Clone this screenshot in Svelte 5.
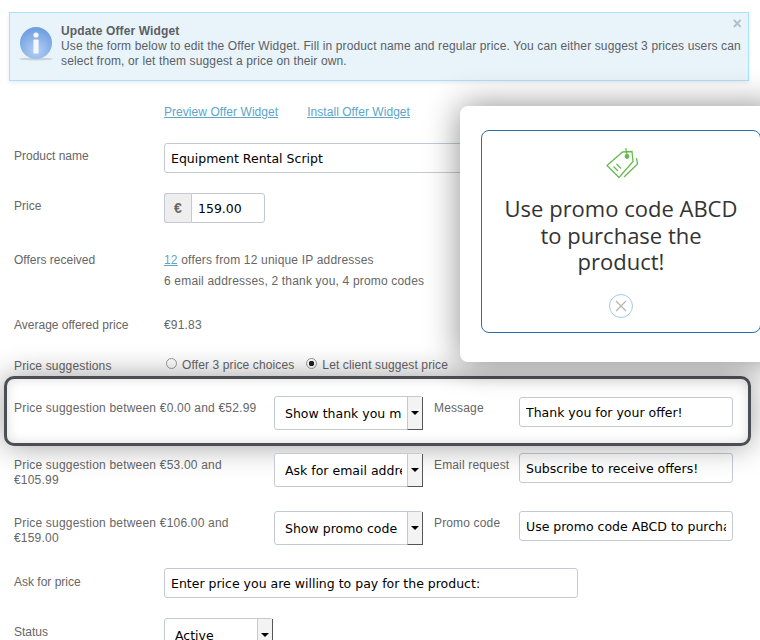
<script>
  const suggestions = [
    {
      label: "Price suggestion between €53.00 and €105.99",
      action: "Ask for email address",
      field: "Email request",
      value: "Subscribe to receive offers!",
    },
    {
      label: "Price suggestion between €106.00 and €159.00",
      action: "Show promo code",
      field: "Promo code",
      value: "Use promo code ABCD to purchase the product!",
    },
  ];
</script>

<div class="page">
  <div class="alert">
    <svg class="info" width="36" height="36" viewBox="0 0 36 36">
      <defs>
        <radialGradient id="ball" cx="50%" cy="75%" r="70%">
          <stop offset="0" stop-color="#b4cff5" />
          <stop offset="1" stop-color="#6f9fe0" />
        </radialGradient>
      </defs>
      <ellipse cx="18" cy="33" rx="17" ry="1.5" fill="#c9d3d8" />
      <circle cx="18" cy="17" r="16" fill="url(#ball)" />
      <circle cx="18" cy="9" r="2.6" fill="#f4f8fd" />
      <rect x="15.4" y="13.5" width="5.2" height="14" rx="1" fill="#f4f8fd" />
    </svg>
    <div class="alert-text">
      <strong>Update Offer Widget</strong><br />
      Use the form below to edit the Offer Widget. Fill in product name and regular price. You can either suggest 3 prices users can select from, or let them suggest a price on their own.
    </div>
    <span class="dismiss">×</span>
  </div>

  <div class="links">
    <a href="#preview">Preview Offer Widget</a>
    <a href="#install">Install Offer Widget</a>
  </div>

  <div class="row product">
    <span class="label">Product name</span>
    <input class="wide" type="text" value="Equipment Rental Script" />
  </div>

  <div class="row price">
    <span class="label">Price</span>
    <div class="money">
      <span class="currency">€</span>
      <input type="text" value="159.00" />
    </div>
  </div>

  <div class="row offers">
    <span class="label">Offers received</span>
    <div class="offers-text">
      <a href="#offers">12</a> offers from 12 unique IP addresses<br />
      6 email addresses, 2 thank you, 4 promo codes
    </div>
  </div>

  <div class="row average">
    <span class="label">Average offered price</span>
    <span class="amount">€91.83</span>
  </div>

  <div class="row choices">
    <span class="label">Price suggestions</span>
    <div class="radios">
      <label><input type="radio" name="mode" />Offer 3 price choices</label>
      <label><input type="radio" name="mode" checked />Let client suggest price</label>
    </div>
  </div>

  <div class="highlight">
    <span class="tier-label">Price suggestion between €0.00 and €52.99</span>
    <div class="select">
      <select><option>Show thank you message</option></select>
      <span class="arrow"></span>
    </div>
    <span class="field-label">Message</span>
    <input class="field" type="text" value="Thank you for your offer!" />
  </div>

  {#each suggestions as tier}
    <div class="tier">
      <span class="tier-label">{tier.label}</span>
      <div class="select">
        <select><option>{tier.action}</option></select>
        <span class="arrow"></span>
      </div>
      <span class="field-label">{tier.field}</span>
      <input class="field" type="text" value={tier.value} />
    </div>
  {/each}

  <div class="row ask">
    <span class="label">Ask for price</span>
    <input class="wide" type="text" value="Enter price you are willing to pay for the product:" />
  </div>

  <div class="row status">
    <span class="label">Status</span>
    <div class="select small">
      <select><option>Active</option></select>
      <span class="arrow"></span>
    </div>
  </div>

  <div class="popup">
    <div class="card">
      <svg width="40" height="40" viewBox="0 0 40 40" fill="none" stroke="#66bb4e" stroke-width="1.3">
        <path d="M21.500 9 L31 8.500 L32 18.500 L18 34.500 L6 22.500 Z" />
        <path d="M35.500 15 L36.500 21 L23 34" />
        <circle cx="26" cy="13.500" r="1.800" fill="#66bb4e" />
        <path d="M26 12 C26 9 24.500 7 25 5" />
        <path d="M15.500 21 L20 25.500 M12.500 23.500 L17 28" />
      </svg>
      <p>Use promo code ABCD to purchase the product!</p>
      <svg class="close" width="26" height="26" viewBox="0 0 26 26" fill="none">
        <circle cx="13" cy="13" r="11.500" stroke="#a9c8e4" />
        <path d="M8 8 L18 18 M18 8 L8 18" stroke="#b3b3b3" stroke-width="1.200" />
      </svg>
    </div>
  </div>
</div>

<style>
  :global(body) {
    margin: 0;
    background: #fff;
  }

  .page {
    position: relative;
    width: 760px;
    height: 640px;
    padding-top: 12px;
    box-sizing: border-box;
    overflow: hidden;
    font-family: "Liberation Sans", Arial, sans-serif;
    font-size: 12px;
    line-height: 16px;
    color: #666;
  }

  a {
    color: #5da5c9;
  }

  .alert {
    position: relative;
    display: flex;
    gap: 7px;
    box-sizing: border-box;
    width: 740px;
    height: 69px;
    margin-left: 9px;
    padding: 11px 0 0 8px;
    background: #e8f3fa;
    border: 1px solid #a8e2f7;
    box-shadow: 0 2px 4px rgba(0, 0, 0, 0.08);
    color: #5c5f66;
    line-height: 15px;
    letter-spacing: 0.13px;
  }

  .info {
    flex: none;
    margin-top: 2px;
  }

  .alert-text {
    width: 688px;
  }

  .dismiss {
    position: absolute;
    top: 3px;
    right: 6px;
    color: #b5bdc2;
    font-size: 16px;
    font-weight: bold;
  }

  .links {
    display: flex;
    gap: 29px;
    margin: 23px 0 0 164px;
    letter-spacing: 0.05px;
  }

  .row {
    display: flex;
    padding-left: 14px;
  }

  .label {
    flex: none;
    width: 150px;
  }

  input[type="text"],
  select {
    box-sizing: border-box;
    height: 30px;
    padding: 0 6px;
    background: #fff;
    border: 1px solid #c3cad6;
    border-radius: 3px;
    color: #000;
    font-family: "DejaVu Sans", Verdana, sans-serif;
    font-size: 12.500px;
  }

  .wide {
    width: 414px;
  }

  .product {
    margin-top: 23px;
  }

  .product .label,
  .price .label {
    padding-top: 5px;
  }

  .price {
    margin-top: 20px;
  }

  .money {
    display: flex;
  }

  .currency {
    box-sizing: border-box;
    width: 27px;
    height: 30px;
    background: #eee;
    border: 1px solid #c3cad6;
    border-right: 0;
    border-radius: 3px 0 0 3px;
    font-weight: bold;
    font-size: 14px;
    line-height: 28px;
    text-align: center;
  }

  .money input[type="text"] {
    width: 74px;
    border-radius: 0 3px 3px 0;
  }

  .offers {
    margin-top: 27px;
    line-height: 21px;
  }

  .offers .label {
    line-height: 20px;
  }

  .offers-text,
  .amount {
    letter-spacing: 0.18px;
  }

  .average {
    margin-top: 25px;
  }

  .choices {
    height: 16px;
    margin-top: 24px;
  }

  .choices .label {
    letter-spacing: 0.17px;
    line-height: 18px;
  }

  .radios {
    display: flex;
    gap: 10px;
    letter-spacing: 0.12px;
  }

  .radios label {
    display: flex;
    align-items: center;
    gap: 5px;
  }

  .radios input {
    appearance: none;
    box-sizing: border-box;
    width: 11px;
    height: 11px;
    margin: 0 0 4px 2px;
    background: #fff;
    border: 1px solid #9a9a9a;
    border-radius: 50%;
  }

  .radios input:checked {
    background: radial-gradient(circle, #222 0 2.500px, #fff 3px);
  }

  .highlight,
  .tier {
    display: flex;
    align-items: flex-start;
  }

  .highlight {
    position: relative;
    box-sizing: border-box;
    width: 747px;
    height: 70px;
    margin: 3px 0 0 4px;
    padding: 17px 0 0 7px;
    background: #fff;
    border: 3px solid #4b4e53;
    border-radius: 10px;
    box-shadow: 0 0 30px rgba(0, 0, 0, 0.38), inset 0 0 12px rgba(0, 0, 0, 0.14);
  }

  .tier {
    height: 34px;
    margin-top: 24px;
    padding-left: 14px;
  }

  .highlight + .tier {
    margin-top: 7px;
  }

  .tier-label {
    flex: none;
    width: 250px;
    margin-right: 10px;
    padding-top: 5px;
    line-height: 15px;
    letter-spacing: 0.2px;
  }

  .select {
    position: relative;
    flex: none;
    width: 149px;
    height: 34px;
  }

  .select select {
    appearance: none;
    display: block;
    width: 100%;
    height: 100%;
    padding: 0 20px 0 10px;
  }

  .select.small {
    width: 109px;
  }

  .arrow {
    position: absolute;
    top: 1px;
    right: 0;
    bottom: 0;
    width: 16px;
    background: #f3f3f3;
    border-left: 1px solid #c3cad6;
    border-right: 1px solid #555;
    border-bottom: 1px solid #555;
    box-sizing: border-box;
  }

  .arrow::after {
    content: "";
    position: absolute;
    top: 14px;
    left: 3px;
    border: 4px solid transparent;
    border-top-color: #000;
    border-bottom: 0;
  }

  .field-label {
    flex: none;
    width: 85px;
    margin-left: 11px;
    padding-top: 4px;
    letter-spacing: 0.15px;
  }

  .field {
    width: 214px;
  }

  .highlight .field {
    margin-top: 1px;
  }

  .ask {
    margin-top: 23px;
  }

  .ask .label,
  .status .label {
    padding-top: 6px;
  }

  .status {
    margin-top: 20px;
  }

  .popup {
    position: absolute;
    top: 106px;
    left: 460px;
    box-sizing: border-box;
    width: 320px;
    height: 256px;
    padding: 24px 0 0 21px;
    background: #fff;
    border-radius: 8px;
    box-shadow: 0 0 34px rgba(0, 0, 0, 0.45);
  }

  .card {
    display: flex;
    flex-direction: column;
    align-items: center;
    box-sizing: border-box;
    width: 280px;
    height: 203px;
    padding-top: 12px;
    border: 1px solid #2a6fad;
    border-radius: 8px;
  }

  .card p {
    margin: 12px 0 0;
    width: 250px;
    color: #333;
    font-family: "Open Sans", sans-serif;
    font-size: 22px;
    line-height: 26.500px;
    text-align: center;
  }

  .close {
    margin-top: 18px;
  }
</style>
